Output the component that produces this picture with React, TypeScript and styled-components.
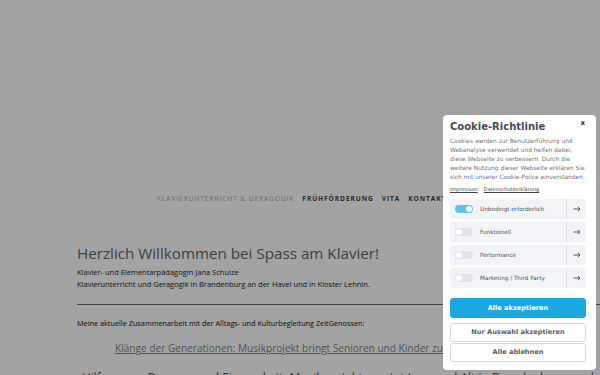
import React from "react";
import styled, { createGlobalStyle } from "styled-components";

const Global = createGlobalStyle`
  html, body { margin: 0; padding: 0; background: #fff; }
  body { font-family: "Open Sans", "Noto Sans", sans-serif; }
  * { box-sizing: border-box; }
`;

const Page = styled.div`
  width: 600px;
  height: 375px;
  overflow: hidden;
  background: #fff;
  display: flex;
  flex-direction: column;
`;

const Nav = styled.nav`
  display: flex;
  gap: 8px;
  padding: 194px 0 0 157px;
  white-space: nowrap;
`;

const NavItem = styled.a<{ $active?: boolean }>`
  font-family: "Open Sans", sans-serif;
  font-size: 6.6px;
  line-height: 10px;
  letter-spacing: 0.93px;
  text-transform: uppercase;
  font-weight: ${(p) => (p.$active ? 400 : 700)};
  color: ${(p) => (p.$active ? "#a6a6a6" : "#444")};
  text-decoration: none;
`;

const Content = styled.main`
  display: flex;
  flex-direction: column;
  padding: 0 0 0 77px;
  margin-top: 39px;
`;

const Title = styled.h1`
  margin: 0;
  font-family: "Open Sans", sans-serif;
  font-weight: 400;
  font-size: 15.2px;
  line-height: 20px;
  color: #646464;
  white-space: nowrap;
`;

const Lead = styled.p`
  margin: 4px 0 0;
  font-size: 7.5px;
  line-height: 11.5px;
  color: #222;
  white-space: nowrap;
`;

const Rule = styled.hr`
  margin: 14px 0 0;
  border: none;
  border-top: 1px solid #666;
  width: 600px;
`;

const Small = styled.p`
  margin: 13px 0 0;
  font-size: 7.3px;
  line-height: 10px;
  color: #111;
  white-space: nowrap;
`;

const LinkLine = styled.a`
  margin: 13px 0 0 38px;
  font-size: 10.1px;
  line-height: 15px;
  color: #7f7f7f;
  text-decoration: underline;
  white-space: nowrap;
`;

const Para = styled.p`
  margin: 14px 0 0;
  font-size: 12px;
  line-height: 16px;
  color: #555;
  white-space: nowrap;
`;

const Overlay = styled.div`
  position: fixed;
  inset: 0;
  background: rgba(0, 0, 0, 0.36);
`;

const Modal = styled.div`
  position: fixed;
  left: 443px;
  top: 115px;
  width: 153px;
  background: #fff;
  border-radius: 4px;
  padding: 5px 10px 8px 7px;
  display: flex;
  flex-direction: column;
  font-family: "DejaVu Sans", Verdana, sans-serif;
`;

const Close = styled.span`
  position: absolute;
  right: 11px;
  top: 3px;
  font-size: 7px;
  line-height: 10px;
  font-weight: 700;
  color: #222;
`;

const MTitle = styled.h2`
  margin: 0;
  font-size: 10px;
  line-height: 14px;
  font-weight: 700;
  color: #474a58;
`;

const MText = styled.p`
  margin: 2.5px 0 0;
  font-size: 5.9px;
  line-height: 9px;
  color: #72747a;
`;

const MLinks = styled.div`
  display: flex;
  gap: 6px;
  margin-top: 3.5px;
`;

const MLink = styled.a`
  font-size: 5px;
  line-height: 8px;
  color: #444;
  text-decoration: underline;
`;

const Rows = styled.div`
  display: flex;
  flex-direction: column;
  gap: 3.5px;
  margin-top: 6px;
`;

const Row = styled.div`
  display: flex;
  align-items: center;
  height: 19.5px;
  background: #f3f4f8;
  border-radius: 3px;
`;

const Toggle = styled.span<{ $on?: boolean }>`
  position: relative;
  flex: none;
  width: 18px;
  height: 8px;
  margin-left: 5px;
  border-radius: 4px;
  background: ${(p) => (p.$on ? "#5cc3ec" : "#e2e4ea")};
  &::after {
    content: "";
    position: absolute;
    top: 1px;
    left: ${(p) => (p.$on ? "11px" : "1px")};
    width: 6px;
    height: 6px;
    border-radius: 50%;
    background: #fff;
  }
`;

const RowLabel = styled.span`
  flex: 1;
  margin-left: 7px;
  font-size: 5.7px;
  color: #4b4d55;
`;

const Arrow = styled.span`
  flex: none;
  width: 20px;
  height: 100%;
  border-left: 1px solid #dfe1e7;
  display: flex;
  align-items: center;
  justify-content: center;
`;

const Buttons = styled.div`
  display: flex;
  flex-direction: column;
  margin-top: 10px;
  gap: 1px;
`;

const Btn = styled.button<{ $primary?: boolean }>`
  height: ${(p) => (p.$primary ? "20px" : "19px")};
  margin-bottom: ${(p) => (p.$primary ? "4px" : "0")};
  border-radius: 3px;
  font-family: "DejaVu Sans", Verdana, sans-serif;
  font-weight: 700;
  font-size: 6.6px;
  border: 1px solid ${(p) => (p.$primary ? "#1ca8e1" : "#d6d9e2")};
  background: ${(p) => (p.$primary ? "#1ca8e1" : "#fff")};
  color: ${(p) => (p.$primary ? "#fff" : "#5b5d66")};
  padding: 0;
`;

const ArrowIcon = () => (
  <svg width="8" height="6" viewBox="0 0 8 6" fill="none" stroke="#333" strokeWidth="0.8">
    <path d="M0.5 3h6.5M4.8 0.8L7 3 4.8 5.2" />
  </svg>
);

const rows = [
  { label: "Unbedingt erforderlich", on: true },
  { label: "Funktionell" },
  { label: "Performance" },
  { label: "Marketing / Third Party" },
];

export default function App() {
  return (
    <>
      <Global />
      <Page>
        <Nav>
          <NavItem $active>Klavierunterricht &amp; Geragogik</NavItem>
          <NavItem>Frühförderung</NavItem>
          <NavItem>Vita</NavItem>
          <NavItem>Kontakt</NavItem>
          <NavItem>Impressum</NavItem>
        </Nav>
        <Content>
          <Title>Herzlich Willkommen bei Spass am Klavier!</Title>
          <Lead>
            Klavier- und Elementarpädagogin Jana Schulze
            <br />
            Klavierunterricht und Geragogik in Brandenburg an der Havel und in Kloster Lehnin.
          </Lead>
          <Rule />
          <Small>Meine aktuelle Zusammenarbeit mit der Alltags- und Kulturbegleitung ZeitGenossen:</Small>
          <LinkLine>Klänge der Generationen: Musikprojekt bringt Senioren und Kinder zusammen</LinkLine>
          <Para>„Hilfe gegen Demenz und Einsamkeit: Musikprojekt vereint Jung und Alt in Brandenburg an der Havel“</Para>
        </Content>
      </Page>
      <Overlay />
      <Modal>
        <Close>x</Close>
        <MTitle>Cookie-Richtlinie</MTitle>
        <MText>
          Cookies werden zur Benutzerführung und Webanalyse verwendet und helfen dabei, diese Webseite zu
          verbessern. Durch die weitere Nutzung dieser Webseite erklären Sie sich mit unserer Cookie-Police
          einverstanden.
        </MText>
        <MLinks>
          <MLink>Impressum</MLink>
          <MLink>Datenschutzerklärung</MLink>
        </MLinks>
        <Rows>
          {rows.map((r) => (
            <Row key={r.label}>
              <Toggle $on={r.on} />
              <RowLabel>{r.label}</RowLabel>
              <Arrow>
                <ArrowIcon />
              </Arrow>
            </Row>
          ))}
        </Rows>
        <Buttons>
          <Btn $primary>Alle akzeptieren</Btn>
          <Btn>Nur Auswahl akzeptieren</Btn>
          <Btn>Alle ablehnen</Btn>
        </Buttons>
      </Modal>
    </>
  );
}
